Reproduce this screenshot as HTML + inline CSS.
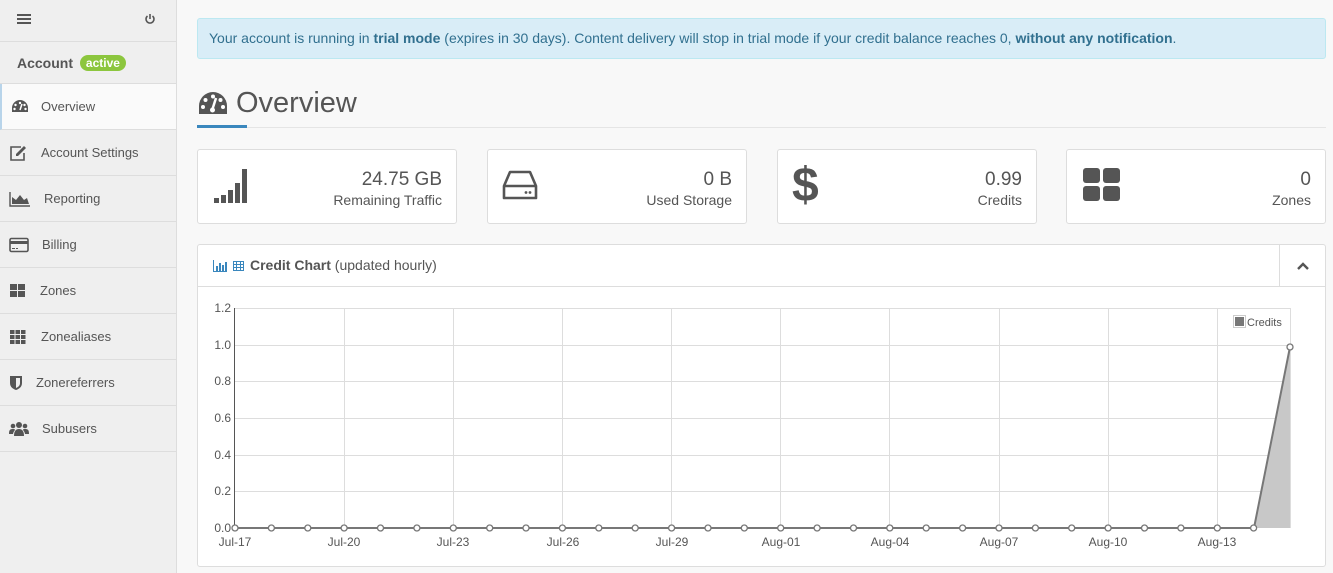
<!DOCTYPE html>
<html><head><meta charset="utf-8"><style>
*{box-sizing:border-box;margin:0;padding:0}
body{width:1333px;height:573px;overflow:hidden;background:#f8f8f8;font-family:"Liberation Sans",sans-serif;color:#555;position:relative}
.side{position:absolute;left:0;top:0;width:177px;height:573px;background:#efefef;border-right:1px solid #ddd}
.top{height:42px;border-bottom:1px solid #ddd;position:relative}
.acc{height:42px;border-bottom:1px solid #ddd;padding:13px 0 0 17px;font-weight:bold;font-size:14px;color:#555}
.badge{display:inline-block;background:#8cc63e;color:#fff;border-radius:9px;font-size:12px;padding:1px 6px;margin-left:3px;vertical-align:1px}
.item{height:46px;border-bottom:1px solid #ddd;font-size:13px;color:#555;display:flex;align-items:center;position:relative}
.item svg{position:absolute;left:9px}
.item span{position:absolute}
.item.on{background:#fafafa;border-left:2px solid #b8d4ea}
.alert{position:absolute;left:197px;top:18px;width:1129px;height:41px;background:#d9edf7;border:1px solid #bce8f1;border-radius:3px;color:#31708f;font-size:14px;padding:11px 11px}
h1{position:absolute;left:236px;top:87px;font-weight:normal;font-size:29px;color:#555}
.hr{position:absolute;left:197px;top:127px;width:1129px;height:1px;background:#e5e5e5}
.hrb{position:absolute;left:197px;top:125px;width:50px;height:3px;background:#3a87bd}
.card{position:absolute;top:149px;width:260px;height:75px;background:#fff;border:1px solid #ddd;border-radius:3px}
.card .v{position:absolute;right:14px;top:19px;font-size:19px;color:#555;text-align:right;line-height:22px}
.card .v small{display:block;font-size:14px;line-height:18px}
.card svg{position:absolute}
.panel{position:absolute;left:197px;top:244px;width:1129px;height:323px;background:#fff;border:1px solid #ddd;border-radius:3px}
.ph{height:42px;border-bottom:1px solid #ddd;font-size:14px;padding:12px 0 0 52px;color:#555}
.ph b{color:#555}
.coll{position:absolute;right:0;top:0;width:46px;height:42px;border-left:1px solid #ddd}
</style></head><body>
<div class="side">
 <div class="top">
  <svg style="position:absolute;left:17px;top:13px" width="14" height="12"><rect y="1" width="14" height="2" fill="#555"/><rect y="5" width="14" height="2" fill="#555"/><rect y="9" width="14" height="2" fill="#555"/></svg>
  <svg style="position:absolute;left:144px;top:13px" width="12" height="12" viewBox="0 0 12 12"><path d="M3.5 3A4 4 0 1 0 8.5 3" stroke="#555" stroke-width="1.6" fill="none"/><line x1="6" y1="1" x2="6" y2="6" stroke="#555" stroke-width="1.6"/></svg>
 </div>
 <div class="acc">Account <span class="badge">active</span></div>
 <div class="item on"><svg width="18" height="16" viewBox="0 0 18 16"><path d="M9 1A8 8 0 0 0 1 9v4h16V9A8 8 0 0 0 9 1z" fill="#555"/><circle cx="9" cy="4" r="1.2" fill="#fff"/><circle cx="4.5" cy="6" r="1.2" fill="#fff"/><circle cx="13.5" cy="6" r="1.2" fill="#fff"/><circle cx="3.5" cy="10" r="1.2" fill="#fff"/><circle cx="14.5" cy="10" r="1.2" fill="#fff"/><path d="M11 5L9 11" stroke="#fff" stroke-width="1.5"/></svg><span style="left:39px">Overview</span></div>
 <div class="item"><svg width="18" height="16" viewBox="0 0 18 16"><path d="M12 2H2v13h13V8" stroke="#555" stroke-width="1.6" fill="none"/><path d="M15 1l2 2-8 8H7V9z" fill="#555"/></svg><span style="left:41px">Account Settings</span></div>
 <div class="item"><svg width="22" height="16" viewBox="0 0 22 16"><path d="M1 1v14h20" stroke="#555" stroke-width="1.4" fill="none"/><path d="M3 13V6l4 3 4-5 4 5 3-2 2 6z" fill="#555"/></svg><span style="left:44px">Reporting</span></div>
 <div class="item"><svg width="20" height="16" viewBox="0 0 20 16"><rect x="1" y="1.5" width="18" height="13" rx="1.5" stroke="#555" stroke-width="1.6" fill="none"/><rect x="1" y="4" width="18" height="3" fill="#555"/><rect x="3" y="11" width="3" height="1" fill="#555"/><rect x="7" y="11" width="2" height="1" fill="#555"/></svg><span style="left:42px">Billing</span></div>
 <div class="item"><svg width="18" height="16" viewBox="0 0 18 16"><rect x="1" y="1" width="7" height="6" fill="#555"/><rect x="9" y="1" width="7" height="6" fill="#555"/><rect x="1" y="8" width="7" height="6" fill="#555"/><rect x="9" y="8" width="7" height="6" fill="#555"/></svg><span style="left:40px">Zones</span></div>
 <div class="item"><svg width="18" height="16" viewBox="0 0 18 16" fill="#555"><rect x="1" y="1" width="4.5" height="4"/><rect x="6.5" y="1" width="4.5" height="4"/><rect x="12" y="1" width="4.5" height="4"/><rect x="1" y="6" width="4.5" height="4"/><rect x="6.5" y="6" width="4.5" height="4"/><rect x="12" y="6" width="4.5" height="4"/><rect x="1" y="11" width="4.5" height="4"/><rect x="6.5" y="11" width="4.5" height="4"/><rect x="12" y="11" width="4.5" height="4"/></svg><span style="left:41px">Zonealiases</span></div>
 <div class="item"><svg width="14" height="16" viewBox="0 0 14 16"><path d="M1 1h12v7c0 4-3 6-6 7-3-1-6-3-6-7z" fill="#555"/><path d="M7 3h4v5c0 3-2 4-4 5z" fill="#efefef"/></svg><span style="left:36px">Zonereferrers</span></div>
 <div class="item"><svg width="20" height="16" viewBox="0 0 20 16" fill="#555"><circle cx="10" cy="4" r="3"/><circle cx="4" cy="5" r="2.3"/><circle cx="16" cy="5" r="2.3"/><path d="M5 15c0-5 2-7 5-7s5 2 5 7z"/><path d="M0 13c0-4 1-5 4-5 1 0 2 0 2 1-1 1-2 3-2 4z"/><path d="M20 13c0-4-1-5-4-5-1 0-2 0-2 1 1 1 2 3 2 4z"/></svg><span style="left:42px">Subusers</span></div>
</div>

<div class="alert">Your account is running in <b>trial mode</b> (expires in 30 days). Content delivery will stop in trial mode if your credit balance reaches 0, <b>without any notification</b>.</div>

<svg style="position:absolute;left:197px;top:90px" width="32" height="28" viewBox="0 0 32 28"><path d="M16 2A14 14 0 0 0 2 16v8h28v-8A14 14 0 0 0 16 2z" fill="#555"/><circle cx="16" cy="6.5" r="2" fill="#fff"/><circle cx="8.5" cy="10" r="2" fill="#fff"/><circle cx="23.5" cy="10" r="2" fill="#fff"/><circle cx="6" cy="17" r="2" fill="#fff"/><circle cx="26" cy="17" r="2" fill="#fff"/><path d="M19 8L15.5 19" stroke="#fff" stroke-width="2.5"/><circle cx="15.5" cy="20" r="2.5" fill="#fff"/></svg>
<h1>Overview</h1>
<div class="hr"></div><div class="hrb"></div>

<div class="card" style="left:197px"><svg style="left:16px;top:19px" width="40" height="36" viewBox="0 0 40 36" fill="#555"><rect x="0" y="29" width="5" height="5"/><rect x="7" y="26" width="5" height="8"/><rect x="14" y="21" width="5" height="13"/><rect x="21" y="14" width="5" height="20"/><rect x="28" y="0" width="5" height="34"/></svg><div class="v">24.75 GB<small>Remaining Traffic</small></div></div>
<div class="card" style="left:487px"><svg style="left:14px;top:20px" width="36" height="32" viewBox="0 0 36 32"><path d="M8 2h20l6 14v12H2V16z" stroke="#555" stroke-width="2.6" fill="none" stroke-linejoin="round"/><line x1="2" y1="16" x2="34" y2="16" stroke="#555" stroke-width="2.6"/><circle cx="24" cy="22.5" r="1.4" fill="#555"/><circle cx="28" cy="22.5" r="1.4" fill="#555"/></svg><div class="v">0 B<small>Used Storage</small></div></div>
<div class="card" style="left:777px"><div style="position:absolute;left:14px;top:7px;font-size:48px;font-weight:bold;color:#555;line-height:58px">$</div><div class="v">0.99<small>Credits</small></div></div>
<div class="card" style="left:1066px"><svg style="left:16px;top:18px" width="38" height="34" viewBox="0 0 38 34" fill="#555"><rect x="0" y="0" width="17" height="15" rx="3"/><rect x="20" y="0" width="17" height="15" rx="3"/><rect x="0" y="18" width="17" height="15" rx="3"/><rect x="20" y="18" width="17" height="15" rx="3"/></svg><div class="v">0<small>Zones</small></div></div>

<div class="panel">
 <div class="ph"><b>Credit Chart</b> (updated hourly)</div>
 <div class="coll"><svg style="position:absolute;left:16px;top:16px" width="14" height="10"><path d="M2 8L7 3l5 5" stroke="#555" stroke-width="2.4" fill="none"/></svg></div>
</div>
<svg style="position:absolute;left:212px;top:259px" width="34" height="14" viewBox="0 0 34 14"><g fill="#3a87bd"><rect x="1" y="1" width="1" height="12"/><rect x="1" y="12" width="14" height="1"/><rect x="4" y="7" width="2" height="5"/><rect x="7" y="4" width="2" height="8"/><rect x="10" y="6" width="2" height="6"/><rect x="13" y="3" width="2" height="9"/></g><g fill="none" stroke="#3a87bd"><rect x="21.5" y="2.5" width="10" height="9"/><line x1="21.5" y1="5.5" x2="31.5" y2="5.5"/><line x1="21.5" y1="8.5" x2="31.5" y2="8.5"/><line x1="24.5" y1="2.5" x2="24.5" y2="11.5"/><line x1="28.5" y1="2.5" x2="28.5" y2="11.5"/></g></svg>

<svg style="position:absolute;left:0;top:0" width="1333" height="573" font-family="Liberation Sans,sans-serif" font-size="12" fill="#555">
 <g stroke="#ddd" stroke-width="1">
  <line x1="235" y1="308.5" x2="1291" y2="308.5"/><line x1="235" y1="345.5" x2="1291" y2="345.5"/><line x1="235" y1="381.5" x2="1291" y2="381.5"/><line x1="235" y1="418.5" x2="1291" y2="418.5"/><line x1="235" y1="455.5" x2="1291" y2="455.5"/><line x1="235" y1="491.5" x2="1291" y2="491.5"/>
  <line x1="344.5" y1="308" x2="344.5" y2="528"/><line x1="453.5" y1="308" x2="453.5" y2="528"/><line x1="562.5" y1="308" x2="562.5" y2="528"/><line x1="671.5" y1="308" x2="671.5" y2="528"/><line x1="780.5" y1="308" x2="780.5" y2="528"/><line x1="889.5" y1="308" x2="889.5" y2="528"/><line x1="999.5" y1="308" x2="999.5" y2="528"/><line x1="1108.5" y1="308" x2="1108.5" y2="528"/><line x1="1217.5" y1="308" x2="1217.5" y2="528"/><line x1="1290.5" y1="308" x2="1290.5" y2="528"/>
 </g>
 <line x1="234.5" y1="308" x2="234.5" y2="529" stroke="#555"/>
 <g text-anchor="end" font-size="12"><text x="231" y="312">1.2</text><text x="231" y="349">1.0</text><text x="231" y="385">0.8</text><text x="231" y="422">0.6</text><text x="231" y="459">0.4</text><text x="231" y="495">0.2</text><text x="231" y="532">0.0</text></g>
 <g text-anchor="middle" font-size="12"><text x="235" y="546">Jul-17</text><text x="344" y="546">Jul-20</text><text x="453" y="546">Jul-23</text><text x="563" y="546">Jul-26</text><text x="672" y="546">Jul-29</text><text x="781" y="546">Aug-01</text><text x="890" y="546">Aug-04</text><text x="999" y="546">Aug-07</text><text x="1108" y="546">Aug-10</text><text x="1217" y="546">Aug-13</text></g>
 <path d="M1254 528L1290 347L1290 528z" fill="#c8c8c8"/>
 <path d="M235 528H1254L1290 347" stroke="#777" stroke-width="2" fill="none"/>
 <g fill="#fff" stroke="#777" stroke-width="1.3">
  <circle cx="235" cy="528" r="3"/><circle cx="271.4" cy="528" r="3"/><circle cx="307.8" cy="528" r="3"/><circle cx="344.1" cy="528" r="3"/><circle cx="380.5" cy="528" r="3"/><circle cx="416.9" cy="528" r="3"/><circle cx="453.3" cy="528" r="3"/><circle cx="489.7" cy="528" r="3"/><circle cx="526" cy="528" r="3"/><circle cx="562.4" cy="528" r="3"/><circle cx="598.8" cy="528" r="3"/><circle cx="635.2" cy="528" r="3"/><circle cx="671.6" cy="528" r="3"/><circle cx="708" cy="528" r="3"/><circle cx="744.3" cy="528" r="3"/><circle cx="780.7" cy="528" r="3"/><circle cx="817.1" cy="528" r="3"/><circle cx="853.5" cy="528" r="3"/><circle cx="889.8" cy="528" r="3"/><circle cx="926.2" cy="528" r="3"/><circle cx="962.6" cy="528" r="3"/><circle cx="999" cy="528" r="3"/><circle cx="1035.4" cy="528" r="3"/><circle cx="1071.7" cy="528" r="3"/><circle cx="1108.1" cy="528" r="3"/><circle cx="1144.5" cy="528" r="3"/><circle cx="1180.9" cy="528" r="3"/><circle cx="1217.3" cy="528" r="3"/><circle cx="1253.6" cy="528" r="3"/><circle cx="1290" cy="347" r="3"/>
 </g>
 <rect x="1233.5" y="315.5" width="12" height="12" fill="#fff" stroke="#ccc"/><rect x="1235" y="317" width="9" height="9" fill="#777"/>
 <text x="1247" y="326" font-size="11">Credits</text>
</svg>
</body></html>
